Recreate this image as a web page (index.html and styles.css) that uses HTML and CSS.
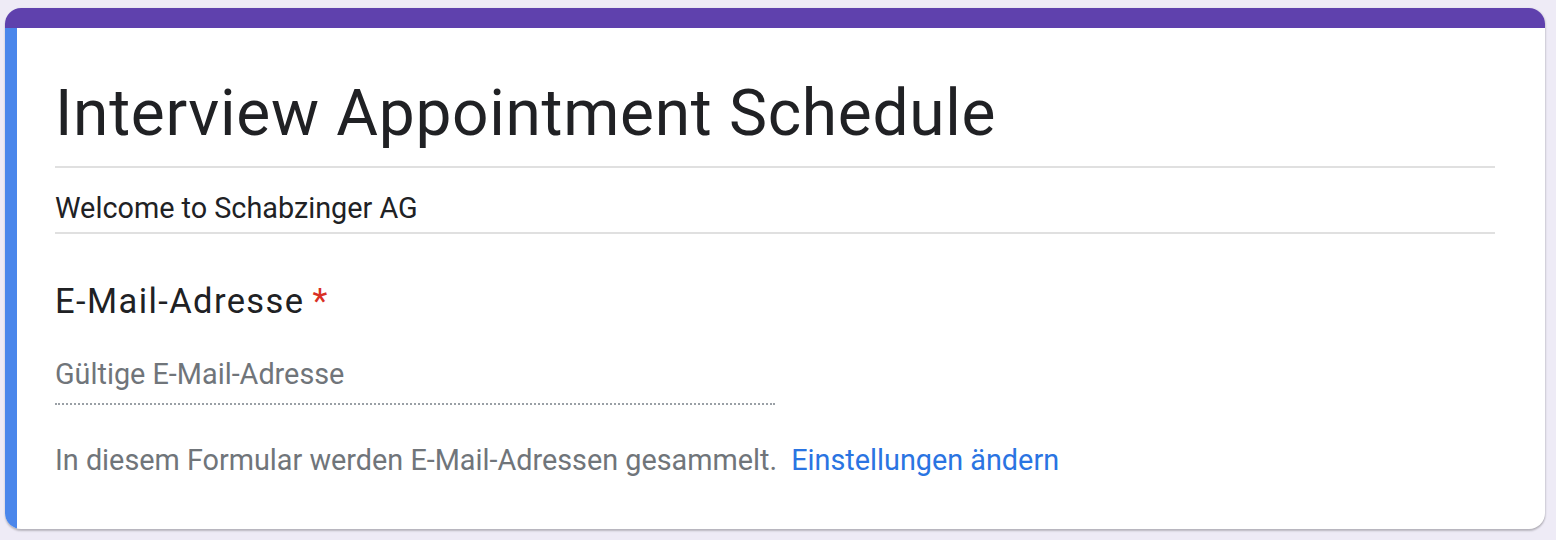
FILE: index.html
```html
<!DOCTYPE html>
<html lang="de">
<head>
<meta charset="utf-8">
<title>Interview Appointment Schedule</title>
<link rel="stylesheet" href="styles.css">
</head>
<body>
<div class="card">
  <div class="card-top"></div>
  <div class="card-body">
    <h1 class="title">Interview Appointment Schedule</h1>
    <div class="desc">Welcome to Schabzinger AG</div>
    <div class="question">
      <div class="q-label">E-Mail-Adresse <span class="req">*</span></div>
      <div class="input">Gültige E-Mail-Adresse</div>
    </div>
    <div class="note">In diesem Formular werden E-Mail-Adressen gesammelt. <a class="link" href="#">Einstellungen ändern</a></div>
  </div>
</div>
</body>
</html>
```

FILE: styles.css
```css
html, body {
  margin: 0;
  padding: 0;
  background: #eeebf6;
  height: 100%;
}
body {
  padding: 8px 11px 0 5px;
  box-sizing: border-box;
  font-family: Roboto, "Liberation Sans", sans-serif;
}
.card {
  background: #fff;
  border-radius: 16px;
  overflow: hidden;
  box-shadow: 0 2px 2px rgba(0,0,0,0.22), 1px 0 2px rgba(0,0,0,0.08);
  height: 521px;
  display: flex;
  flex-direction: column;
}
.card-top {
  height: 20px;
  background: #5f41ad;
  flex: none;
}
.card-body {
  flex: 1;
  border-left: 12px solid #4a86eb;
  padding: 0 50px 0 38px;
  display: flex;
  flex-direction: column;
}
.title {
  margin: 0;
  font-weight: 400;
  font-size: 64px;
  line-height: 76px;
  padding-top: 48px;
  padding-bottom: 14px;
  color: #202124;
  border-bottom: 2px solid #e0e0e0;
  letter-spacing: 0.7px;
}
.desc {
  font-size: 28.8px;
  line-height: 32px;
  padding: 24px 0 8px;
  color: #202124;
  border-bottom: 2px solid #e0e0e0;
}
.question {
  padding-top: 47px;
}
.q-label {
  font-size: 34.5px;
  line-height: 40px;
  color: #202124;
  letter-spacing: 1.4px;
}
.req {
  color: #d93025;
  letter-spacing: 0;
  margin-left: -2px;
}
.input {
  width: 720px;
  font-size: 28.8px;
  line-height: 32px;
  color: #70757a;
  padding: 37px 0 13px;
  border-bottom: 2px dotted #9aa0a6;
}
.note {
  font-size: 28.8px;
  line-height: 32px;
  color: #70757a;
  padding-top: 39px;
}
.link {
  color: #2a74e2;
  text-decoration: none;
  margin-left: 7px;
}
```
